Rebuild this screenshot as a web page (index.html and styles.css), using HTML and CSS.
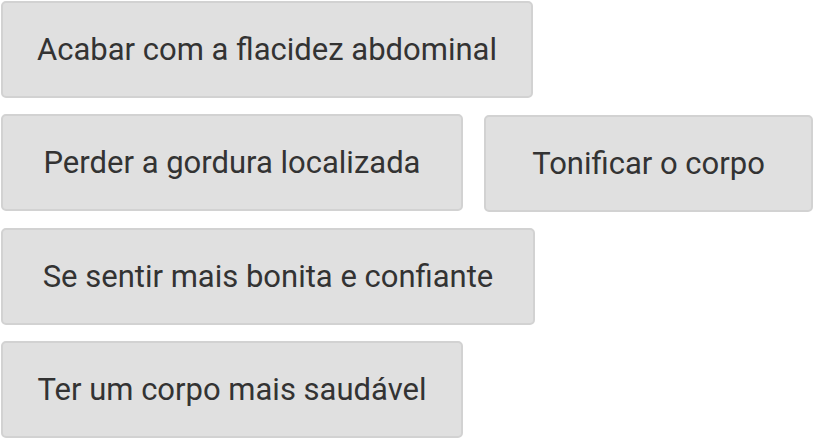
FILE: index.html
```html
<!DOCTYPE html>
<html lang="pt">
<head>
<meta charset="utf-8">
<link rel="stylesheet" href="styles.css">
</head>
<body>
<div class="options">
  <button class="opt opt-wide">Acabar com a flacidez abdominal</button>
  <button class="opt opt-mid">Perder a gordura localizada</button>
  <button class="opt opt-small">Tonificar o corpo</button>
  <button class="opt opt-wider">Se sentir mais bonita e confiante</button>
  <button class="opt opt-mid">Ter um corpo mais saudável</button>
</div>
</body>
</html>
```

FILE: styles.css
```css
html, body {
  margin: 0;
  padding: 0;
  background: #ffffff;
}
.options {
  display: flex;
  flex-wrap: wrap;
  column-gap: 21px;
  row-gap: 16px;
  padding: 1px 0 0 1px;
  width: 813px;
  align-items: flex-start;
}
.opt {
  box-sizing: border-box;
  height: 97px;
  margin: 0;
  padding: 0;
  background: #e0e0e0;
  border: 2px solid #d2d2d2;
  border-radius: 5px;
  color: #333333;
  font-family: Roboto, "Liberation Sans", sans-serif;
  font-size: 31px;
  font-weight: 400;
  text-align: center;
  line-height: 1;
}
.opt-wide { width: 532px; }
.opt-mid { width: 462px; }
.opt-small { width: 329px; margin-top: 1px; }
.opt-wider { width: 534px; }
```
